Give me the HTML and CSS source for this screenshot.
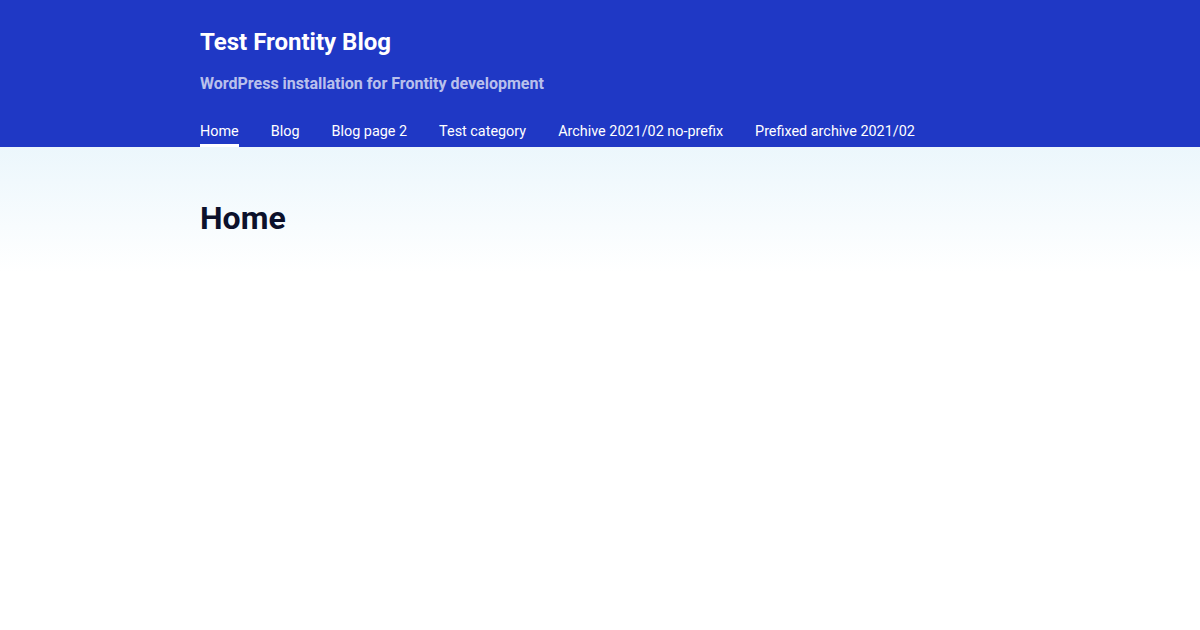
FILE: index.html
```html
<!DOCTYPE html>
<html lang="en">
<head>
    <meta charset="UTF-8">
    <meta name="viewport" content="width=device-width, initial-scale=1.0">
    <title>Test Frontity Blog</title>
    <link rel="stylesheet" href="styles.css">
</head>
<body>
    <header class="head">
        <div class="container">
            <h2 class="site-title">Test Frontity Blog</h2>
            <h4 class="site-desc">WordPress installation for Frontity development</h4>
        </div>
        <nav class="nav">
            <div class="nav-item"><a href="#" class="current">Home</a></div>
            <div class="nav-item"><a href="#">Blog</a></div>
            <div class="nav-item"><a href="#">Blog page 2</a></div>
            <div class="nav-item"><a href="#">Test category</a></div>
            <div class="nav-item"><a href="#">Archive 2021/02 no-prefix</a></div>
            <div class="nav-item"><a href="#">Prefixed archive 2021/02</a></div>
        </nav>
    </header>
    <main class="main">
        <div class="post">
            <h1 class="post-title">Home</h1>
        </div>
    </main>
</body>
</html>
```

FILE: styles.css
```css
html {
    font-family: Roboto, "Liberation Sans", sans-serif;
}
body {
    margin: 0;
    background: #fff;
}
.head {
    background-color: #1f38c5;
    color: #fff;
    display: flex;
    flex-direction: column;
    align-items: center;
}
.container {
    width: 848px;
    max-width: 100%;
    box-sizing: border-box;
    padding: 28px 24px 0;
    display: flex;
    flex-direction: column;
}
.site-title {
    margin: 0 0 18px;
    font-size: 24px;
}
.site-desc {
    margin: 0;
    font-size: 16px;
    color: rgba(255, 255, 255, 0.7);
}
.nav {
    display: flex;
    width: 848px;
    max-width: 100%;
    box-sizing: border-box;
    padding: 0 24px;
    margin-top: 28px;
}
.nav-item {
    margin: 0 16px;
    font-size: 0.9em;
    color: #fff;
}
.nav-item:first-child {
    margin-left: 0;
}
.nav-item a {
    display: inline-block;
    line-height: 22.8px;
    color: inherit;
    text-decoration: none;
    border-bottom: 3px solid transparent;
}
.nav-item a.current {
    border-bottom-color: #fff;
}
.main {
    display: flex;
    justify-content: center;
    background-image: linear-gradient(180deg, rgba(66, 174, 228, 0.1), rgba(66, 174, 228, 0));
}
.post {
    width: 800px;
    padding: 24px;
}
.post-title {
    margin: 28px 0 12px;
    font-size: 32px;
    color: rgba(12, 17, 43);
}
```
